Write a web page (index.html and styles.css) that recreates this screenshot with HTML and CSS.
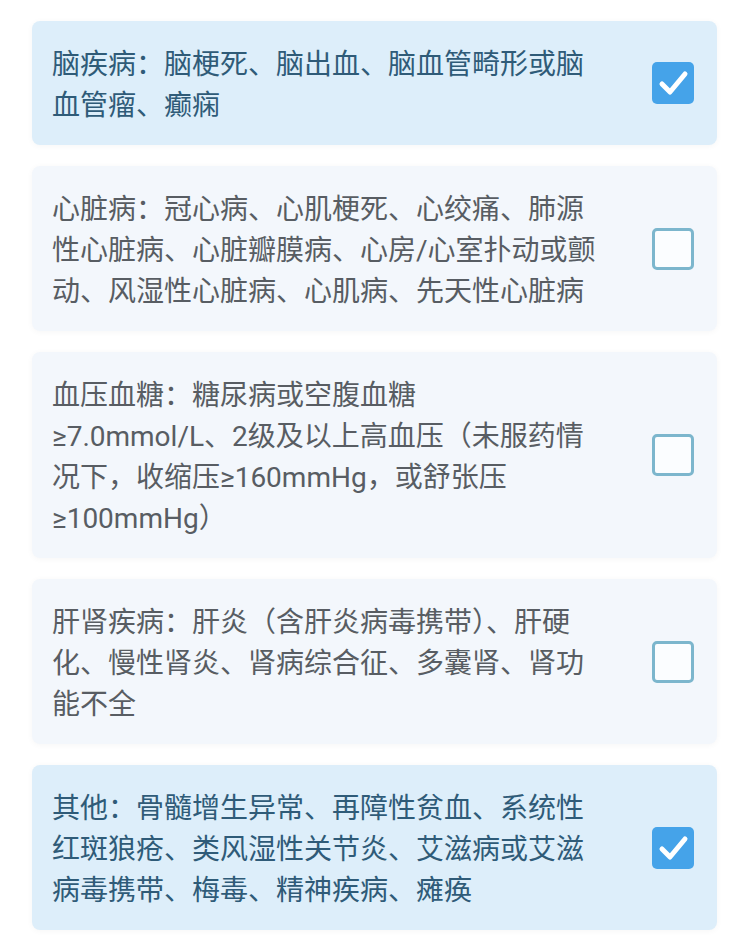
FILE: index.html
```html
<!DOCTYPE html>
<html lang="zh-CN">
<head>
  <meta charset="UTF-8">
  <meta name="viewport" content="width=device-width, initial-scale=1.0">
  <title>健康告知</title>
  <link rel="stylesheet" href="styles.css">
</head>
<body>

<div class="list">
  <div class="item checked">
    <div class="text">脑疾病：脑梗死、脑出血、脑血管畸形或脑<br>血管瘤、癫痫</div>
    <span class="box"><svg viewBox="0 0 42 42" width="42" height="42"><path d="M10 22 L18 30 L33 12" fill="none" stroke="#fff" stroke-width="5" stroke-linecap="round" stroke-linejoin="round"/></svg></span>
  </div>

  <div class="item">
    <div class="text">心脏病：冠心病、心肌梗死、心绞痛、肺源<br>性心脏病、心脏瓣膜病、心房/心室扑动或颤<br>动、风湿性心脏病、心肌病、先天性心脏病</div>
    <span class="box"></span>
  </div>

  <div class="item">
    <div class="text">血压血糖：糖尿病或空腹血糖<br>≥7.0mmol/L、2级及以上高血压（未服药情<br>况下，收缩压≥160mmHg，或舒张压<br>≥100mmHg）</div>
    <span class="box"></span>
  </div>

  <div class="item">
    <div class="text">肝肾疾病：肝炎（含肝炎病毒携带）、肝硬<br>化、慢性肾炎、肾病综合征、多囊肾、肾功<br>能不全</div>
    <span class="box"></span>
  </div>

  <div class="item checked">
    <div class="text">其他：骨髓增生异常、再障性贫血、系统性<br>红斑狼疮、类风湿性关节炎、艾滋病或艾滋<br>病毒携带、梅毒、精神疾病、瘫痪</div>
    <span class="box"><svg viewBox="0 0 42 42" width="42" height="42"><path d="M10 22 L18 30 L33 12" fill="none" stroke="#fff" stroke-width="5" stroke-linecap="round" stroke-linejoin="round"/></svg></span>
  </div>
</div>

</body>
</html>
```

FILE: styles.css
```css
body {
  margin: 0;
  background-color: #fff;
  font-family: Roboto, "Noto Sans CJK SC", sans-serif;
}

.list {
  padding: 21px 33px 0 32px;
}

.item {
  display: flex;
  align-items: center;
  background-color: #f3f7fc;
  border-radius: 8px;
  box-shadow: 0 1px 6px rgba(0, 0, 0, 0.04);
  padding: 21px 23px 21px 20px;
  margin-bottom: 21px;
}

.item.checked {
  background-color: #ddeefa;
}

.text {
  flex: 1;
  font-size: 28px;
  line-height: 41px;
  padding-top: 2px;
  margin-bottom: -2px;
  color: #585d63;
  white-space: nowrap;
}

.item.checked .text {
  color: #2f5b78;
}

.box {
  width: 36px;
  height: 36px;
  border: 3px solid #7cb6cd;
  border-radius: 5px;
  background-color: #fbfdff;
  flex-shrink: 0;
}

.item.checked .box {
  width: 42px;
  height: 42px;
  border: none;
  background-color: #45a3e9;
}

.box svg {
  display: block;
}
```
